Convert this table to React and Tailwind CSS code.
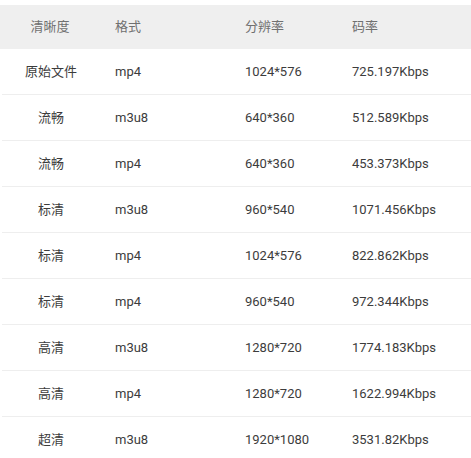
import React from "react";

const rows = [
  ["原始文件", "mp4", "1024*576", "725.197Kbps"],
  ["流畅", "m3u8", "640*360", "512.589Kbps"],
  ["流畅", "mp4", "640*360", "453.373Kbps"],
  ["标清", "m3u8", "960*540", "1071.456Kbps"],
  ["标清", "mp4", "1024*576", "822.862Kbps"],
  ["标清", "mp4", "960*540", "972.344Kbps"],
  ["高清", "m3u8", "1280*720", "1774.183Kbps"],
  ["高清", "mp4", "1280*720", "1622.994Kbps"],
  ["超清", "m3u8", "1920*1080", "3531.82Kbps"],
];

export default function App() {
  return (
    <div
      className="w-[471px] h-[458px] overflow-hidden bg-white pt-[5px] text-[13px]"
      style={{ fontFamily: 'Roboto, "Noto Sans CJK SC", sans-serif' }}
    >
      <div className="flex h-[44px] items-center bg-[#efefef] text-[#707070]">
        <div className="w-[100px] text-center">清晰度</div>
        <div className="w-[145px] pl-[15px]">格式</div>
        <div className="w-[107px]">分辨率</div>
        <div className="flex-1">码率</div>
      </div>
      {rows.map((r, i) => (
        <div
          key={i}
          className="ml-[2px] flex h-[46px] items-center border-b border-[#eeeeee] text-[#3c3c3c]"
        >
          <div className="w-[98px] text-center">{r[0]}</div>
          <div className="w-[145px] pl-[15px]">{r[1]}</div>
          <div className="w-[107px]">{r[2]}</div>
          <div className="flex-1">{r[3]}</div>
        </div>
      ))}
    </div>
  );
}
